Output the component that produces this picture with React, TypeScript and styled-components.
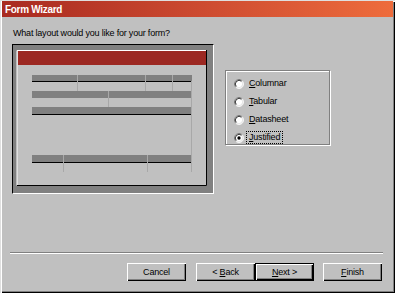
import styled, { createGlobalStyle } from "styled-components";

const GlobalStyle = createGlobalStyle`
  html, body {
    margin: 0;
    padding: 0;
    background: #c0c0c0;
  }
  * {
    box-sizing: border-box;
  }
`;

const layouts = [
  { key: "C", rest: "olumnar" },
  { key: "T", rest: "abular" },
  { key: "D", rest: "atasheet" },
  { key: "J", rest: "ustified" },
];

const Radio = ({ checked }: { checked: boolean }) => (
  <svg width="10" height="10" viewBox="0 0 12 12">
    <circle cx="6" cy="6" r="5" fill="#fff" />
    <path d="M2.11 9.89 A5.5 5.5 0 0 1 9.89 2.11" fill="none" stroke="#808080" />
    <path d="M2.82 9.18 A4.5 4.5 0 0 1 9.18 2.82" fill="none" stroke="#000" />
    <path d="M9.89 2.11 A5.5 5.5 0 0 1 2.11 9.89" fill="none" stroke="#fff" />
    <path d="M9.18 2.82 A4.5 4.5 0 0 1 2.82 9.18" fill="none" stroke="#dfdfdf" />
    {checked && <circle cx="6" cy="6" r="2" fill="#000" />}
  </svg>
);

// the little picture of a justified form
const LayoutPicture = () => (
  <svg width="200" height="148" viewBox="0 0 200 148">
    <rect x="0" y="0" width="200" height="148" fill="#808080" />
    <rect x="4" y="5" width="190" height="136" fill="#c0c0c0" />
    <path d="M4 140.5 V5.5 H193" stroke="#fff" fill="none" />
    <path d="M4 140.5 H193.5 V5" stroke="#000" fill="none" />
    <rect x="5" y="6" width="188" height="14" fill="#9c2822" />

    <rect x="19" y="30" width="160" height="6" fill="#808080" />
    <rect x="19" y="36" width="160" height="1" fill="#000" />
    <rect x="19" y="46" width="160" height="7" fill="#808080" />
    <rect x="19" y="62" width="160" height="7" fill="#808080" />
    <rect x="19" y="69" width="160" height="1" fill="#000" />
    <rect x="19" y="110" width="160" height="7" fill="#808080" />
    <rect x="19" y="117" width="160" height="1" fill="#000" />

    <g stroke="#a8a8a8" strokeWidth="1">
      <line x1="64.5" y1="30" x2="64.5" y2="46" />
      <line x1="132.5" y1="30" x2="132.5" y2="46" />
      <line x1="159.5" y1="30" x2="159.5" y2="46" />
      <line x1="95.5" y1="46" x2="95.5" y2="62" />
      <line x1="50.5" y1="110" x2="50.5" y2="127" />
      <line x1="134.5" y1="110" x2="134.5" y2="127" />
      <line x1="178.5" y1="36" x2="178.5" y2="127" />
    </g>
  </svg>
);

const App = () => {
  return (
    <>
      <GlobalStyle />
      <S.Window>
        <S.TitleBar>
          <S.Title>Form Wizard</S.Title>
        </S.TitleBar>

        <S.Question>What layout would you like for your form?</S.Question>

        <S.Content>
          <S.PreviewFrame>
            <LayoutPicture />
          </S.PreviewFrame>

          <S.OptionGroup>
            {layouts.map((l) => {
              const checked = l.key === "J";
              return (
                <S.OptionRow key={l.key}>
                  <Radio checked={checked} />
                  <S.OptionLabel $focused={checked}>
                    <u>{l.key}</u>
                    {l.rest}
                  </S.OptionLabel>
                </S.OptionRow>
              );
            })}
          </S.OptionGroup>
        </S.Content>

        <S.Footer>
          <S.Separator />
          <S.ButtonRow>
            <S.Button>Cancel</S.Button>
            <S.Button $gap={10}>
              {"< "}
              <u>B</u>ack
            </S.Button>
            <S.Button $default>
              <u>N</u>
              {"ext >"}
            </S.Button>
            <S.Button $gap={9}>
              <u>F</u>inish
            </S.Button>
          </S.ButtonRow>
        </S.Footer>
      </S.Window>
    </>
  );
};

const S = {
  Window: styled.div`
    width: 395px;
    height: 293px;
    display: flex;
    flex-direction: column;
    background: #c0c0c0;
    box-shadow: inset 1px 1px #dfdfdf, inset 2px 2px #fff,
      inset -1px -1px #000, inset -2px -2px #808080;
    font-family: "Liberation Sans", Arial, sans-serif;
    font-size: 9px;
    letter-spacing: -0.2px;
    color: #000;
  `,

  TitleBar: styled.div`
    margin: 1px 2px 0 2px;
    height: 16px;
    display: flex;
    align-items: center;
    padding-left: 3px;
    background: linear-gradient(90deg, #a82a20 0%, #cc4a30 50%, #ee6c3c 100%);
  `,

  Title: styled.span`
    color: #fff;
    font-weight: bold;
    font-size: 10px;
    letter-spacing: -0.3px;
  `,

  Question: styled.div`
    margin: 10px 0 0 13px;
    line-height: 12px;
  `,

  Content: styled.div`
    display: flex;
    align-items: flex-start;
    margin-top: 5px;
  `,

  PreviewFrame: styled.div`
    margin-left: 12px;
    width: 202px;
    height: 150px;
    border-style: solid;
    border-width: 1px;
    border-color: #000 #fff #fff #000;

    svg {
      display: block;
    }
  `,

  OptionGroup: styled.div`
    margin: 26px 0 0 11px;
    width: 105px;
    height: 75px;
    border: 1px solid #808080;
    box-shadow: 1px 1px #fff, inset 1px 1px #fff;
    display: flex;
    flex-direction: column;
    gap: 5px;
    padding: 6px 0 0 8px;
  `,

  OptionRow: styled.div`
    display: flex;
    align-items: center;
    gap: 2px;
    height: 13px;

    svg {
      flex: none;
    }
  `,

  OptionLabel: styled.span<{ $focused?: boolean }>`
    line-height: 11px;
    padding: 0 2px;
    border: 1px dotted ${(p) => (p.$focused ? "#000" : "transparent")};
  `,

  Footer: styled.div`
    margin-top: auto;
    padding-bottom: 12px;
  `,

  Separator: styled.div`
    margin: 0 12px 0 10px;
    height: 2px;
    border-top: 1px solid #808080;
    border-bottom: 1px solid #fff;
  `,

  ButtonRow: styled.div`
    display: flex;
    justify-content: flex-end;
    margin-top: 9px;
    padding-right: 13px;
  `,

  Button: styled.button<{ $default?: boolean; $gap?: number }>`
    width: 59px;
    height: 18px;
    margin-left: ${(p) => p.$gap ?? 0}px;
    padding: 0;
    font: inherit;
    letter-spacing: inherit;
    color: #000;
    background: #c0c0c0;
    border: ${(p) => (p.$default ? "1px solid #000" : "none")};
    box-shadow: inset 1px 1px #fff, inset -1px -1px #000, inset -2px -2px #808080;
    display: flex;
    align-items: center;
    justify-content: center;
    white-space: pre;
  `,
};

export default App;
